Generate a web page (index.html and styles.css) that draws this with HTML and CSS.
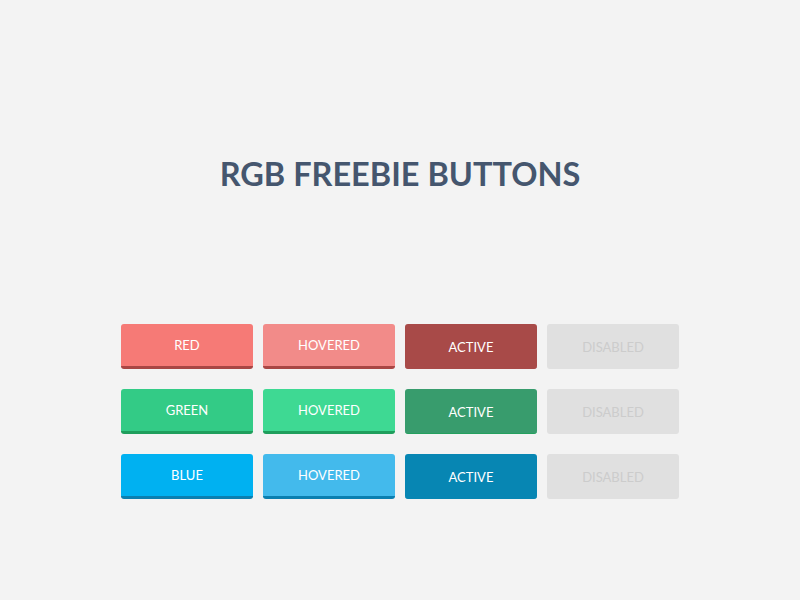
FILE: index.html
```html
<!DOCTYPE html>
<html lang="en">

<head>
    <meta charset="UTF-8">
    <meta name="viewport" content="width=device-width, initial-scale=1.0">
    <title>RGB Freebie Buttons</title>
    <link rel="stylesheet" href="styles.css">
</head>

<body>
    <div class="page">
        <h1 class="title">RGB FREEBIE BUTTONS</h1>
        <div class="buttons">
            <button class="btn red">RED</button>
            <button class="btn red hover">HOVERED</button>
            <button class="btn red active">ACTIVE</button>
            <button class="btn disabled" disabled>DISABLED</button>

            <button class="btn green">GREEN</button>
            <button class="btn green hover">HOVERED</button>
            <button class="btn green active">ACTIVE</button>
            <button class="btn disabled" disabled>DISABLED</button>

            <button class="btn blue">BLUE</button>
            <button class="btn blue hover">HOVERED</button>
            <button class="btn blue active">ACTIVE</button>
            <button class="btn disabled" disabled>DISABLED</button>
        </div>
    </div>
</body>

</html>
```

FILE: styles.css
```css
body {
    margin: 0;
    padding: 0;
    background-color: #f3f3f3;
    font-family: Lato, "Open Sans", sans-serif;
}

.page {
    display: flex;
    flex-direction: column;
    align-items: center;
    padding-top: 154px;
}

.title {
    margin: 0;
    font-size: 32.5px;
    line-height: 40px;
    font-weight: 700;
    color: #45566e;
}

.buttons {
    display: grid;
    grid-template-columns: repeat(4, 132px);
    column-gap: 10px;
    row-gap: 20px;
    margin-top: 130px;
}

.btn {
    height: 45px;
    padding: 0 0 1px;
    border: none;
    border-bottom: 3px solid transparent;
    border-radius: 3px;
    font-family: inherit;
    font-size: 13px;
    color: #fff;
    cursor: pointer;
}

.btn.active {
    padding: 1px 0 0;
    border-bottom-width: 1px;
}

.red {
    background-color: #f67a76;
    border-bottom-color: #a94644;
}

.red.hover {
    background-color: #f28b89;
}

.red.active {
    background-color: #a84a48;
    border-bottom-color: #a84a48;
}

.green {
    background-color: #33cb86;
    border-bottom-color: #1f9e5c;
}

.green.hover {
    background-color: #3ed993;
}

.green.active {
    background-color: #389c6d;
    border-bottom-color: #24a05e;
}

.blue {
    background-color: #00b1f1;
    border-bottom-color: #0a7fb0;
}

.blue.hover {
    background-color: #43baec;
}

.blue.active {
    background-color: #0786b3;
    border-bottom-color: #0786b3;
}

.disabled {
    padding: 1px 0 0;
    background-color: #e0e0e0;
    border-bottom: none;
    color: #cccccc;
    cursor: default;
}
```
